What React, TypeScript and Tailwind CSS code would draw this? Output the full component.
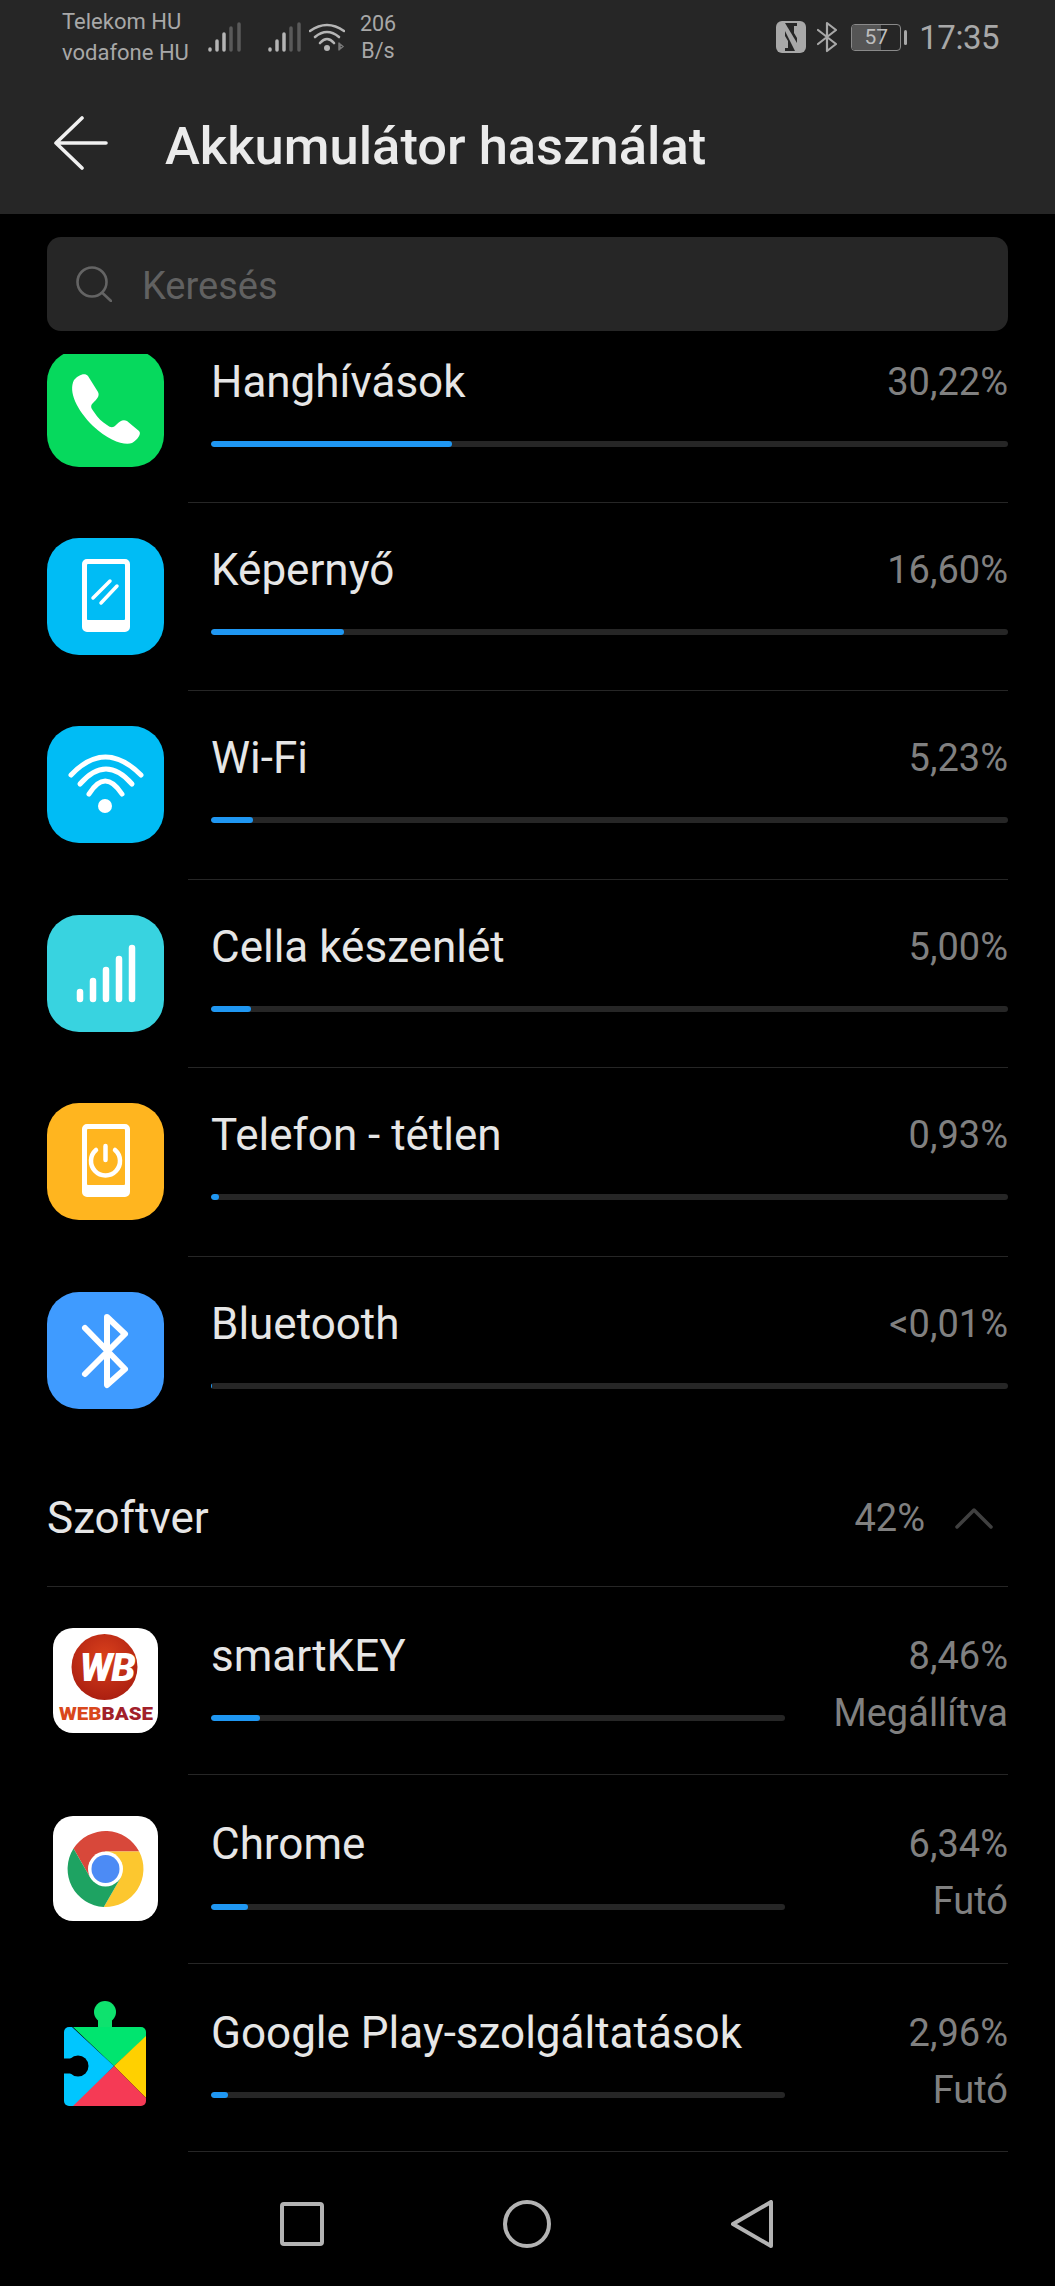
import type { ReactNode } from "react";

function PhoneFrame({ children }: { children?: ReactNode }) {
  return (
    <svg viewBox="0 0 117 117" className="w-full h-full">
      <path
        fillRule="evenodd"
        fill="#fff"
        d="M40 21h38a5 5 0 0 1 5 5v63a5 5 0 0 1-5 5H40a5 5 0 0 1-5-5V26a5 5 0 0 1 5-5zm1 5a1 1 0 0 0-1 1v54a1 1 0 0 0 1 1h36a1 1 0 0 0 1-1V27a1 1 0 0 0-1-1z"
      />
      {children}
    </svg>
  );
}

function CallIcon() {
  return (
    <svg viewBox="0 0 117 117" className="w-full h-full">
      <path
        fill="#fff"
        d="M27 30C31 25 38 22 41 26L51 42C53 46 50 49 46 53C43 56 44 58 47 62C51 68 55 72 60 75C64 78 66 78 69 75C73 71 76 69 80 71L92 81C95 84 90 90 85 93C78 96 62 91 46 76C30 60 21 42 27 30Z"
      />
    </svg>
  );
}

function WifiIcon() {
  return (
    <svg viewBox="0 0 117 117" className="w-full h-full" fill="none" stroke="#fff" strokeWidth="5" strokeLinecap="round">
      <path d="M24 49Q58 13 94 49" />
      <path d="M33 58Q59 28 85 58" />
      <path d="M42 68Q58 42 75 68" />
      <circle cx="58" cy="80" r="7" fill="#fff" stroke="none" />
    </svg>
  );
}

function CellIcon() {
  return (
    <svg viewBox="0 0 117 117" className="w-full h-full" fill="none" stroke="#fff" strokeWidth="6.5" strokeLinecap="round">
      <path d="M33 77V84M46 66V84M59 55V84M72 44V84M85 33V84" />
    </svg>
  );
}

function BluetoothIcon() {
  return (
    <svg viewBox="0 0 117 117" className="w-full h-full" fill="none" stroke="#fff" strokeWidth="6" strokeLinecap="round" strokeLinejoin="round">
      <path d="M38 36L78 77L60 93V25L78 42L38 82" />
    </svg>
  );
}

function WebbaseIcon() {
  return (
    <svg viewBox="0 0 117 117" className="w-full h-full">
      <defs>
        <radialGradient id="wbglobe" cx="50%" cy="35%" r="70%">
          <stop offset="0%" stopColor="#d9401c" />
          <stop offset="100%" stopColor="#a81d10" />
        </radialGradient>
      </defs>
      <rect x="6" y="5" width="105" height="105" rx="20" fill="#fff" />
      <circle cx="57.5" cy="44" r="33" fill="url(#wbglobe)" />
      <text x="60" y="58" textAnchor="middle" fontFamily="Roboto,sans-serif" fontWeight="900" fontStyle="italic" fontSize="39" letterSpacing="-1.5" fill="#fff">
        WB
      </text>
      <text x="12" y="97" fontFamily="Roboto,sans-serif" fontWeight="900" fontSize="19" textLength="94" lengthAdjust="spacingAndGlyphs" fill="#d9481c">
        WEB<tspan fill="#a1202a">BASE</tspan>
      </text>
    </svg>
  );
}

function ChromeIcon() {
  return (
    <svg viewBox="0 0 117 117" className="w-full h-full">
      <rect x="6" y="5" width="105" height="105" rx="20" fill="#fff" />
      <path fill="#d8483a" d="M58.5 40.5H92.2A38 38 0 0 0 26.5 37.6L43.3 66.75Z" />
      <path fill="#fcc72f" d="M92.2 40.5A38 38 0 0 1 56.8 95.9L73.66 66.75L58.5 40.5Z" />
      <path fill="#1ea362" d="M56.8 95.9A38 38 0 0 1 26.5 37.6L43.3 66.75L73.66 66.75Z" />
      <circle cx="58.5" cy="58" r="17.5" fill="#fff" />
      <circle cx="58.5" cy="58" r="14" fill="#4c8bf5" />
    </svg>
  );
}

function PlayServicesIcon() {
  return (
    <svg viewBox="0 0 117 117" className="w-full h-full">
      <defs>
        <clipPath id="gpsq">
          <rect x="17" y="27" width="82" height="79" rx="5" />
        </clipPath>
      </defs>
      <circle cx="58" cy="12" r="11" fill="#0ee26e" />
      <rect x="51" y="18" width="14" height="12" fill="#0ee26e" />
      <g clipPath="url(#gpsq)">
        <path fill="#00e56f" d="M17 27H99V37L67 66L26 27Z" />
        <path fill="#ffd000" d="M99 36V98L67 66Z" />
        <path fill="#f53a55" d="M67 66L99 98V106H26V104Z" />
        <path fill="#00c6ff" d="M17 27H25L67 66L26 106H17Z" />
      </g>
      <circle cx="31" cy="66" r="10.500" fill="#000" />
      <rect x="15" y="58.500" width="14" height="15" fill="#000" />
    </svg>
  );
}

const hardware = [
  { name: "Hanghívások", value: "30,22%", bar: 241, bg: "bg-[#06d95d]", icon: <CallIcon /> },
  {
    name: "Képernyő",
    value: "16,60%",
    bar: 133,
    bg: "bg-[#00bcf5]",
    icon: (
      <PhoneFrame>
        <path d="M46 60L63 43M54 65L70 48" stroke="#fff" strokeWidth="3.5" strokeLinecap="round" />
      </PhoneFrame>
    ),
  },
  { name: "Wi-Fi", value: "5,23%", bar: 42, bg: "bg-[#00bcf5]", icon: <WifiIcon /> },
  { name: "Cella készenlét", value: "5,00%", bar: 40, bg: "bg-[#38d3e0]", icon: <CellIcon /> },
  {
    name: "Telefon - tétlen",
    value: "0,93%",
    bar: 8,
    bg: "bg-[#ffb51f]",
    icon: (
      <PhoneFrame>
        <path d="M49 47A14.5 14.5 0 1 0 68 47M58.5 43V57" fill="none" stroke="#fff" strokeWidth="4.5" strokeLinecap="round" />
      </PhoneFrame>
    ),
  },
  { name: "Bluetooth", value: "<0,01%", bar: 1, bg: "bg-[#3f9bff]", icon: <BluetoothIcon /> },
];

const software = [
  { name: "smartKEY", value: "8,46%", status: "Megállítva", bar: 49, icon: <WebbaseIcon /> },
  { name: "Chrome", value: "6,34%", status: "Futó", bar: 37, icon: <ChromeIcon /> },
  { name: "Google Play-szolgáltatások", value: "2,96%", status: "Futó", bar: 17, icon: <PlayServicesIcon /> },
];

function Bar({ width, full }: { width: number; full?: boolean }) {
  return (
    <div className={`h-[6px] rounded-full bg-[#262626] overflow-hidden ${full ? "w-full" : "w-[574px]"}`}>
      <div className="h-full rounded-full bg-[#1f97f2]" style={{ width }} />
    </div>
  );
}

function Signal() {
  return (
    <svg viewBox="0 0 33 30" className="w-[33px] h-[30px]" fill="none" strokeWidth="3.5" strokeLinecap="round">
      <path d="M2 27V28" stroke="#b5b5b5" />
      <path d="M9 19V28" stroke="#b5b5b5" />
      <path d="M16 12V28" stroke="#b5b5b5" />
      <path d="M23 6V28" stroke="#5a5a5a" />
      <path d="M31 2V28" stroke="#5a5a5a" />
    </svg>
  );
}

export default function App() {
  return (
    <div className="w-[1055px] h-[2286px] bg-black flex flex-col overflow-hidden font-['Roboto',sans-serif]">
      <header className="h-[214px] shrink-0 bg-[#262626]">
        <div className="h-[74px] flex items-center pl-[62px] pr-[56px] text-[#a8a8a8]">
          <div className="w-[146px] text-[22px] leading-[31px] whitespace-nowrap">
            <div>Telekom HU</div>
            <div>vodafone HU</div>
          </div>
          <Signal />
          <div className="ml-[27px]">
            <Signal />
          </div>
          <svg viewBox="0 0 36 30" className="w-[36px] h-[30px] ml-[8px]" fill="none" stroke="#b5b5b5" strokeWidth="2.6" strokeLinecap="round">
            <path d="M1 9Q18 -3 35 9" />
            <path d="M6 15Q18 5 30 15" />
            <path d="M11 21Q18 13 25 21" />
            <circle cx="18" cy="26" r="3" fill="#b5b5b5" stroke="none" />
            <path d="M30 21V28M34 24.500L31 22V27Z" stroke="#777" strokeWidth="1.500" />
          </svg>
          <div className="w-[44px] ml-[11px] text-center text-[21.5px] leading-[27px]">
            <div>206</div>
            <div>B/s</div>
          </div>
          <div className="flex-1" />
          <svg viewBox="0 0 30 32" className="w-[30px] h-[32px]">
            <rect width="30" height="32" rx="6" fill="#a8a8a8" />
            <path d="M9 2H21V30H9Z" fill="#262626" />
            <path d="M9 2L21 22V30H19L9 10Z" fill="#a8a8a8" />
            <path d="M9 27V15L12 20V27ZM21 5V17L18 12V5Z" fill="#a8a8a8" />
          </svg>
          <svg viewBox="0 0 20 32" className="w-[20px] h-[32px] ml-[11px]" fill="none" stroke="#a8a8a8" strokeWidth="2.2" strokeLinecap="round" strokeLinejoin="round">
            <path d="M1 9L19 23L10 30V2L19 9L1 23" />
          </svg>
          <div className="ml-[14px] relative w-[50px] h-[27px] rounded-[4px] border border-[#8a8a8a] overflow-hidden">
            <div className="h-full w-[29px] bg-[#555]" />
            <div className="absolute inset-0 flex items-center justify-center text-[21px] leading-none text-[#bdbdbd]">
              57
            </div>
          </div>
          <div className="ml-[3px] w-[3px] h-[15px] rounded-full bg-[#a8a8a8]" />
          <div className="ml-[12px] text-[33px] tracking-[-0.5px] leading-none">17:35</div>
        </div>
        <div className="h-[140px] flex items-center pl-[54px] pb-[2px]">
          <svg viewBox="0 0 54 54" className="w-[54px] h-[54px]" fill="none" stroke="#f0f0f0" strokeWidth="3.6" strokeLinecap="round" strokeLinejoin="round">
            <path d="M28 2L2 27L28 52M2 27H52" />
          </svg>
          <h1 className="ml-[57px] pt-[7px] text-[52.5px] leading-none font-medium text-[#ebebeb] whitespace-nowrap">
            Akkumulátor használat
          </h1>
        </div>
      </header>

      <div className="mt-[23px] mx-[47px] h-[94px] shrink-0 rounded-[14px] bg-[#262626] flex items-center pl-[29px]">
        <svg viewBox="0 0 36 36" className="w-[36px] h-[36px]" fill="none" stroke="#646464" strokeWidth="2.6" strokeLinecap="round">
          <circle cx="16" cy="16" r="14.500" />
          <path d="M26.500 27L35 35" />
        </svg>
        <span className="ml-[30px] pt-[3px] text-[38px] leading-none text-[#616161]">Keresés</span>
      </div>

      <main className="mt-[23px] flex-1 min-h-0 overflow-hidden">
        <div className="-mt-[39.4px]">
          {hardware.map((item, i) => (
            <div key={item.name} className="flex h-[188.4px]">
              <div className={`mt-[35px] ml-[47px] w-[117px] h-[117px] shrink-0 rounded-[32px] ${item.bg}`}>{item.icon}</div>
              <div className={`ml-[24px] mr-[47px] flex-1 pl-[23px] ${i < hardware.length - 1 ? "border-b border-[#262626]" : ""}`}>
                <div className="mt-[42px] h-[50px] flex items-center justify-between">
                  <span className="text-[44px] leading-none text-[#e6e6e6] whitespace-nowrap">{item.name}</span>
                  <span className="text-[38px] leading-none text-[#808080]">{item.value}</span>
                </div>
                <div className="mt-[34px]">
                  <Bar width={item.bar} full />
                </div>
              </div>
            </div>
          ))}

          <div className="mx-[47px] h-[142px] pt-[5px] flex items-center border-b border-[#262626]">
            <span className="flex-1 text-[44px] leading-none text-[#e6e6e6]">Szoftver</span>
            <span className="text-[38px] leading-none text-[#808080]">42%</span>
            <svg viewBox="0 0 38 22" className="ml-[30px] mr-[15px] w-[38px] h-[22px]" fill="none" stroke="#404040" strokeWidth="3.500" strokeLinecap="round" strokeLinejoin="round">
              <path d="M2 20L19 3L36 20" />
            </svg>
          </div>

          {software.map((item) => (
            <div key={item.name} className="flex h-[188.4px]">
              <div className="mt-[36px] ml-[47px] w-[117px] h-[117px] shrink-0">{item.icon}</div>
              <div className="ml-[24px] mr-[47px] flex-1 pl-[23px] border-b border-[#262626]">
                <div className="mt-[44px] h-[50px] flex items-center justify-between">
                  <span className="text-[44px] leading-none text-[#e6e6e6] whitespace-nowrap">{item.name}</span>
                  <span className="text-[38px] leading-none text-[#808080]">{item.value}</span>
                </div>
                <div className="mt-[7px] h-[50px] flex items-center justify-between">
                  <div className="mt-[11px]">
                    <Bar width={item.bar} />
                  </div>
                  <span className="text-[38px] leading-none text-[#808080]">{item.status}</span>
                </div>
              </div>
            </div>
          ))}
        </div>
      </main>

      <nav className="h-[133px] shrink-0 flex items-start pt-[47px] pl-[280px]">
        <svg viewBox="0 0 44 44" className="w-[44px] h-[44px] mt-[2px]" fill="none" stroke="#b3b3b3" strokeWidth="4" strokeLinejoin="round">
          <rect x="2" y="2" width="40" height="40" rx="2" />
        </svg>
        <svg viewBox="0 0 48 48" className="w-[48px] h-[48px] ml-[179px]" fill="none" stroke="#b3b3b3" strokeWidth="4">
          <circle cx="24" cy="24" r="22" />
        </svg>
        <svg viewBox="0 0 42 48" className="w-[42px] h-[48px] ml-[180px]" fill="none" stroke="#b3b3b3" strokeWidth="4" strokeLinejoin="round">
          <path d="M40 2V46L2 24Z" />
        </svg>
      </nav>
    </div>
  );
}
